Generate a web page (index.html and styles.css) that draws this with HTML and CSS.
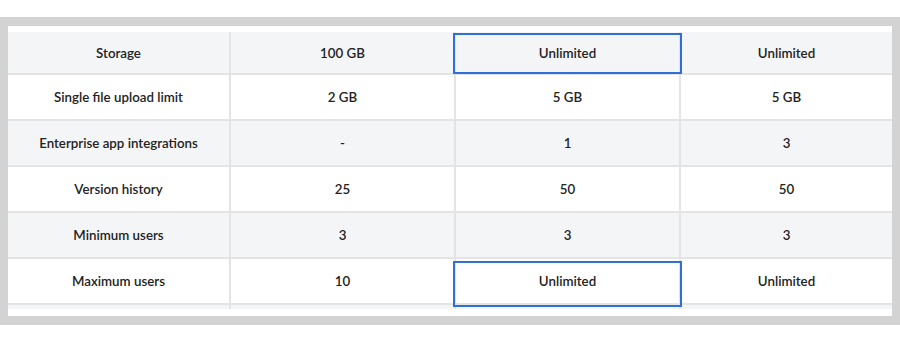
FILE: index.html
```html
<!DOCTYPE html>
<html lang="en">
<head>
<meta charset="utf-8">
<title>Plan comparison</title>
<link rel="stylesheet" href="styles.css">
</head>
<body>
<div class="frame">
  <div class="panel">
    <div class="scroller">
      <div class="table">
        <div class="row alt">
          <div class="cell">Storage</div>
          <div class="cell">100 GB</div>
          <div class="cell hl hl-top">Unlimited</div>
          <div class="cell">Unlimited</div>
        </div>
        <div class="row">
          <div class="cell">Single file upload limit</div>
          <div class="cell">2 GB</div>
          <div class="cell">5 GB</div>
          <div class="cell">5 GB</div>
        </div>
        <div class="row alt">
          <div class="cell">Enterprise app integrations</div>
          <div class="cell">-</div>
          <div class="cell">1</div>
          <div class="cell">3</div>
        </div>
        <div class="row">
          <div class="cell">Version history</div>
          <div class="cell">25</div>
          <div class="cell">50</div>
          <div class="cell">50</div>
        </div>
        <div class="row alt">
          <div class="cell">Minimum users</div>
          <div class="cell">3</div>
          <div class="cell">3</div>
          <div class="cell">3</div>
        </div>
        <div class="row">
          <div class="cell">Maximum users</div>
          <div class="cell">10</div>
          <div class="cell hl hl-bottom">Unlimited</div>
          <div class="cell">Unlimited</div>
        </div>
        <div class="row alt">
          <div class="cell"></div>
          <div class="cell"></div>
          <div class="cell"></div>
          <div class="cell"></div>
        </div>
      </div>
    </div>
  </div>
</div>
</body>
</html>
```

FILE: styles.css
```css
html, body {
  margin: 0;
  padding: 0;
  background: #ffffff;
}

body {
  font-family: Lato, "Liberation Sans", sans-serif;
  color: #222222;
}

.frame {
  margin-top: 17px;
  height: 308px;
  box-sizing: border-box;
  padding: 9px 8px;
  background: #d3d3d3;
}

.panel {
  height: 290px;
  box-sizing: border-box;
  padding: 6px 0 7px;
  background: #ffffff;
}

.scroller {
  height: 277px;
  overflow: hidden;
}

.table {
  display: flex;
  flex-direction: column;
}

.row {
  display: grid;
  grid-template-columns: 223px 225px 225px 1fr;
  height: 46px;
  background: #ffffff;
}

.row:first-child {
  height: 43px;
}

.row.alt {
  background: #f4f5f7;
}

.cell {
  position: relative;
  display: flex;
  align-items: center;
  justify-content: center;
  border-right: 2px solid #e4e4e6;
  border-bottom: 2px solid #e4e4e6;
  font-size: 13.3px;
  font-weight: 600;
  line-height: 16px;
}

.cell:last-child {
  border-right: none;
}

.hl::after {
  content: "";
  position: absolute;
  left: -3px;
  right: -3px;
  border: 2px solid #2f6fd8;
  z-index: 2;
  pointer-events: none;
}

.hl-top::after {
  top: 1px;
  bottom: -1px;
}

.hl-bottom::after {
  top: 2px;
  bottom: -4px;
}
```
